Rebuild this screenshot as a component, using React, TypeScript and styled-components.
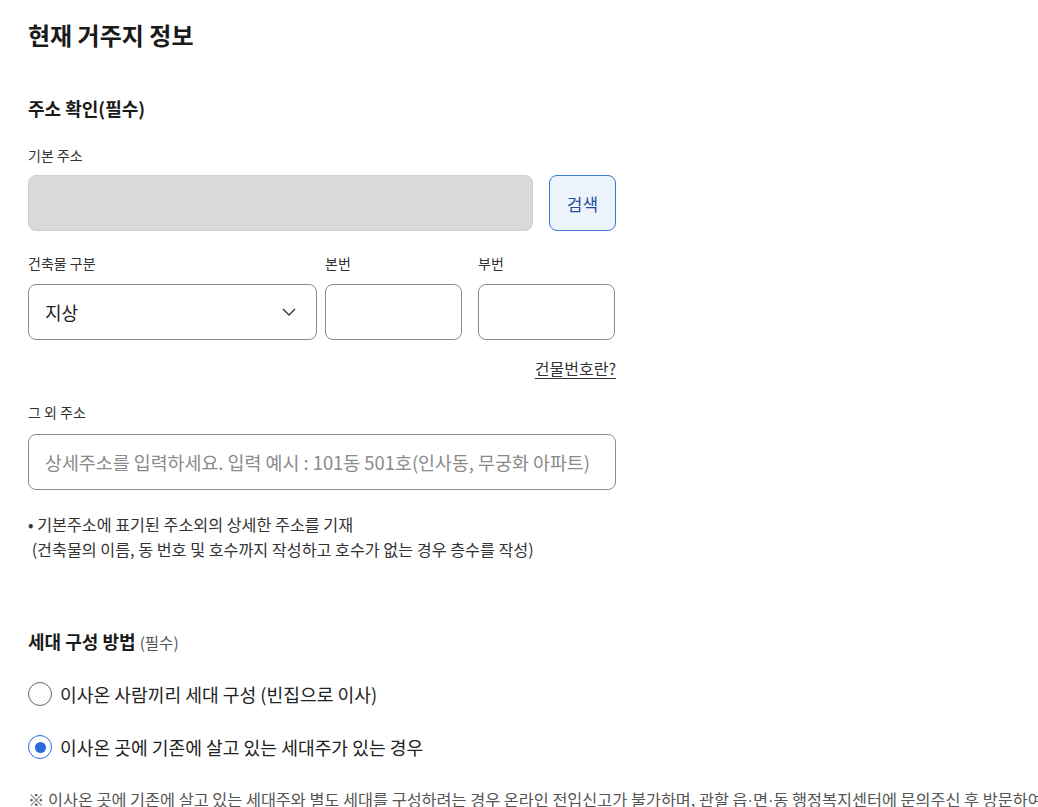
import React from "react";
import styled, { createGlobalStyle } from "styled-components";

const Global = createGlobalStyle`
  html, body { margin: 0; padding: 0; background: #fff; overflow: hidden; }
  body { font-family: "Noto Sans CJK KR", "Noto Sans", sans-serif; color: #222; }
  * { box-sizing: border-box; }
`;

const Page = styled.div`
  padding: 20px 0 0 28px;
  width: 1038px;
`;

const Form = styled.div`
  width: 588px;
  display: flex;
  flex-direction: column;
`;

const Title = styled.h1`
  margin: 0;
  font-size: 24px;
  line-height: 30px;
  font-weight: 700;
  color: #1a1a1a;
`;

const Heading = styled.h2<{ $top: number }>`
  margin: ${(p) => p.$top}px 0 0;
  font-size: 18px;
  line-height: 24px;
  font-weight: 700;
  color: #1a1a1a;
`;

const Sub = styled.span`
  font-size: 15.5px;
  font-weight: 400;
  color: #555;
`;

const Label = styled.div<{ $top: number }>`
  margin-top: ${(p) => p.$top}px;
  font-size: 14px;
  line-height: 20px;
  color: #333;
`;

const Row = styled.div<{ $top: number }>`
  margin-top: ${(p) => p.$top}px;
  display: flex;
  gap: 16px;
`;

const BoxBase = styled.div`
  height: 56px;
  border-radius: 8px;
  border: 1px solid #8c8c8c;
  background: #fff;
`;

const Disabled = styled(BoxBase)`
  flex: 1;
  background: #d9d9d9;
  border-color: #cfcfcf;
`;

const SearchButton = styled.button`
  width: 67px;
  height: 56px;
  border-radius: 8px;
  border: 1px solid #3a77cf;
  background: #eef4fc;
  color: #1f4f9f;
  font-family: inherit;
  font-size: 17px;
  padding: 0;
`;

const Grid = styled.div<{ $top: number }>`
  margin-top: ${(p) => p.$top}px;
  display: grid;
  grid-template-columns: 289px 8px 137px 16px 137px;
`;

const GridLabel = styled.div<{ $col: number }>`
  grid-column: ${(p) => p.$col};
  grid-row: 1;
  font-size: 14px;
  line-height: 20px;
  color: #333;
  margin-bottom: 11px;
`;

const Select = styled(BoxBase)`
  grid-column: 1;
  grid-row: 2;
  display: flex;
  align-items: center;
  justify-content: space-between;
  padding: 0 20px 0 16px;
  font-size: 18px;
  color: #222;
`;

const SmallBox = styled(BoxBase)<{ $col: number }>`
  grid-column: ${(p) => p.$col};
  grid-row: 2;
`;

const Link = styled.a`
  margin-top: 17px;
  align-self: flex-end;
  font-size: 16px;
  line-height: 22px;
  color: #333;
  text-decoration: underline;
  text-underline-offset: 3px;
`;

const TextBox = styled(BoxBase)`
  margin-top: 12px;
  display: flex;
  align-items: center;
  padding: 0 16px;
  font-size: 18.4px;
  color: #8a8a8a;
  white-space: nowrap;
`;

const Notes = styled.div`
  margin-top: 22px;
  font-size: 16.2px;
  line-height: 25px;
  color: #333;
  white-space: nowrap;
`;

const RadioRow = styled.label<{ $top: number }>`
  margin-top: ${(p) => p.$top}px;
  display: flex;
  align-items: center;
  gap: 8px;
  height: 26px;
  font-size: 18.2px;
  color: #222;
`;

const Circle = styled.span<{ $checked?: boolean }>`
  width: 24px;
  height: 24px;
  border-radius: 50%;
  border: ${(p) => (p.$checked ? "1.5px solid #2a6bdb" : "1px solid #666")};
  display: flex;
  align-items: center;
  justify-content: center;
  flex: none;
  &::after {
    content: "";
    display: ${(p) => (p.$checked ? "block" : "none")};
    width: 11px;
    height: 11px;
    border-radius: 50%;
    background: #2a6bdb;
  }
`;

const Note = styled.div`
  margin-top: 27px;
  font-size: 16.3px;
  line-height: 24px;
  color: #555;
  white-space: nowrap;
`;

const Dot = styled.span`
  font-family: "Liberation Sans", sans-serif;
`;

const Chevron = () => (
  <svg width="14" height="8" viewBox="0 0 14 8" fill="none">
    <path d="M1 1l6 6 6-6" stroke="#333" strokeWidth="1.4" />
  </svg>
);

export default function App() {
  return (
    <Page>
      <Global />
      <Form>
        <Title>현재 거주지 정보</Title>
        <Heading $top={46}>주소 확인(필수)</Heading>
        <Label $top={25}>기본 주소</Label>
        <Row $top={10}>
          <Disabled />
          <SearchButton>검색</SearchButton>
        </Row>
        <Grid $top={22}>
          <GridLabel $col={1}>건축물 구분</GridLabel>
          <GridLabel $col={3}>본번</GridLabel>
          <GridLabel $col={5}>부번</GridLabel>
          <Select>
            <span>지상</span>
            <Chevron />
          </Select>
          <SmallBox $col={3} />
          <SmallBox $col={5} />
        </Grid>
        <Link>건물번호란?</Link>
        <Label $top={23}>그 외 주소</Label>
        <TextBox>상세주소를 입력하세요. 입력 예시 : 101동 501호(인사동, 무궁화 아파트)</TextBox>
        <Notes>
          <div>• 기본주소에 표기된 주소외의 상세한 주소를 기재</div>
          <div>&nbsp;(건축물의 이름, 동 번호 및 호수까지 작성하고 호수가 없는 경우 층수를 작성)</div>
        </Notes>
        <Heading $top={67}>
          세대 구성 방법 <Sub>(필수)</Sub>
        </Heading>
        <RadioRow $top={27}>
          <Circle />
          이사온 사람끼리 세대 구성 (빈집으로 이사)
        </RadioRow>
        <RadioRow $top={27}>
          <Circle $checked />
          이사온 곳에 기존에 살고 있는 세대주가 있는 경우
        </RadioRow>
        <Note>
          ※ 이사온 곳에 기존에 살고 있는 세대주와 별도 세대를 구성하려는 경우 온라인 전입신고가 불가하며, 관할 읍<Dot>·</Dot>면<Dot>·</Dot>동 행정복지센터에 문의주신 후 방문하여 신고해 주시기 바랍니다.
        </Note>
      </Form>
    </Page>
  );
}
